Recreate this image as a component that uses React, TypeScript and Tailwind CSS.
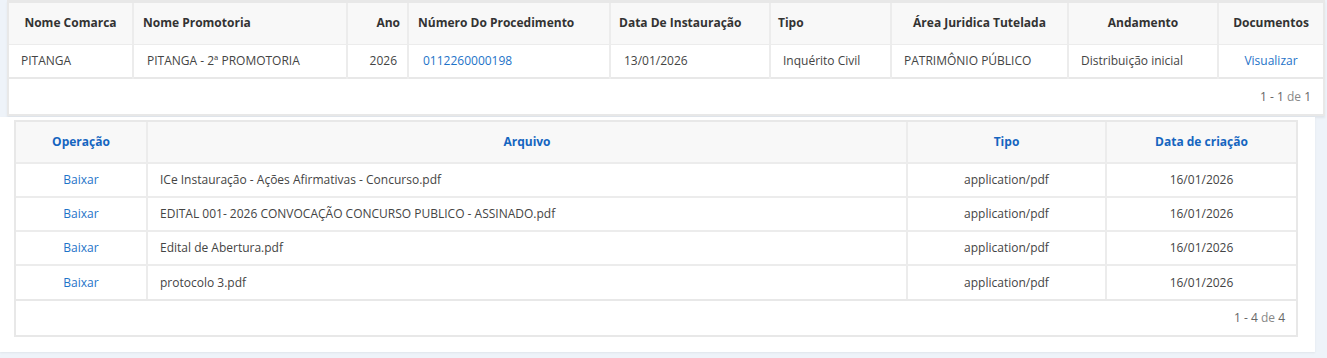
import React from "react";

const font = { fontFamily: '"Open Sans", "Noto Sans", Arial, sans-serif' };

interface arquivo {
  nome: string;
  tipo: string;
  data: string;
}

const arquivos: arquivo[] = [
  { nome: "ICe Instauração - Ações Afirmativas - Concurso.pdf", tipo: "application/pdf", data: "16/01/2026" },
  { nome: "EDITAL 001- 2026 CONVOCAÇÃO CONCURSO PUBLICO - ASSINADO.pdf", tipo: "application/pdf", data: "16/01/2026" },
  { nome: "Edital de Abertura.pdf", tipo: "application/pdf", data: "16/01/2026" },
  { nome: "protocolo 3.pdf", tipo: "application/pdf", data: "16/01/2026" },
];

export default function App() {
  const th = "h-[41px] px-[12px] font-bold text-[#333] border-r-2 border-[#ececec] last:border-r-0 whitespace-nowrap";
  const td = "h-[34px] px-[12px] border-r-2 border-[#ececec] last:border-r-0 whitespace-nowrap";
  const th2 = "h-[41px] px-[12px] font-bold text-[#1565c0] text-center border-r-2 border-[#ececec] last:border-r-0";
  const td2 = "h-[34px] px-[12px] border-r-2 border-t-2 border-[#ececec] last:border-r-0 whitespace-nowrap";
  const txt = "text-[#444]";
  const link = "text-[#1e73c8]";

  return (
    <div className="min-h-[358px] w-[1327px] bg-[#eef3f9] text-[12px]" style={font}>
      {/* grid dos procedimentos */}
      <div className="pl-[7px] pr-[2px]">
        <div className="bg-white border-2 border-t-[3px] border-[#e8e8e8] shadow-[0_2px_2px_rgba(0,0,0,0.06)]">
          <table className="w-full table-fixed border-collapse">
            <colgroup>
              <col className="w-[124px]" />
              <col className="w-[214px]" />
              <col className="w-[61px]" />
              <col className="w-[202px]" />
              <col className="w-[160px]" />
              <col className="w-[121px]" />
              <col className="w-[177px]" />
              <col className="w-[150px]" />
              <col />
            </colgroup>
            <thead className="bg-[#f8f8f8]">
              <tr className="border-b border-[#ececec]">
                <th className={`${th} text-center`}>Nome Comarca</th>
                <th className={`${th} text-left pl-[9px]`}>Nome Promotoria</th>
                <th className={`${th} text-right pr-[7px]`}>Ano</th>
                <th className={`${th} text-left pl-[9px]`}>Número Do Procedimento</th>
                <th className={`${th} text-left pl-[8px]`}>Data De Instauração</th>
                <th className={`${th} text-left pl-[7px]`}>Tipo</th>
                <th className={`${th} text-center`}>Área Juridica Tutelada</th>
                <th className={`${th} text-center`}>Andamento</th>
                <th className={`${th} text-center`}>Documentos</th>
              </tr>
            </thead>
            <tbody>
              <tr className="border-b-2 border-[#e8e8e8]">
                <td className={`${td} ${txt} pl-[12px]`}>PITANGA</td>
                <td className={`${td} ${txt} pl-[13px]`}>PITANGA - 2ª PROMOTORIA</td>
                <td className={`${td} ${txt} text-right pr-[10px]`}>2026</td>
                <td className={`${td} ${link} pl-[14px]`}>0112260000198</td>
                <td className={`${td} ${txt} pl-[13px]`}>13/01/2026</td>
                <td className={`${td} ${txt} pl-[12px]`}>Inquérito Civil</td>
                <td className={`${td} ${txt} pl-[12px]`}>PATRIMÔNIO PÚBLICO</td>
                <td className={`${td} ${txt} pl-[12px]`}>Distribuição inicial</td>
                <td className={`${td} ${link} text-center`}>Visualizar</td>
              </tr>
            </tbody>
          </table>
          <div className="h-[35px] flex items-center justify-end pr-[12px] text-[#666]">
            <span>1 - 1 <span className="text-[#888]">de</span> 1</span>
          </div>
        </div>
      </div>

      {/* grid dos documentos */}
      <div className="w-[1315px] bg-white mt-[1px] pt-[3px] pl-[14px] pr-[17px] pb-[15px] shadow-[0_1px_2px_rgba(0,0,0,0.06)]">
        <div className="border-2 border-[#e8e8e8]">
          <table className="w-full table-fixed border-collapse">
            <colgroup>
              <col className="w-[131px]" />
              <col className="w-[760px]" />
              <col className="w-[199px]" />
              <col />
            </colgroup>
            <thead className="bg-[#f8f8f8]">
              <tr>
                <th className={th2}>Operação</th>
                <th className={th2}>Arquivo</th>
                <th className={th2}>Tipo</th>
                <th className={th2}>Data de criação</th>
              </tr>
            </thead>
            <tbody>
              {arquivos.map((a) => (
                <tr key={a.nome}>
                  <td className={`${td2} ${link} text-center`}>Baixar</td>
                  <td className={`${td2} ${txt} text-left`}>{a.nome}</td>
                  <td className={`${td2} ${txt} text-center`}>{a.tipo}</td>
                  <td className={`${td2} ${txt} text-center`}>{a.data}</td>
                </tr>
              ))}
            </tbody>
          </table>
          <div className="h-[36px] border-t-2 border-[#e8e8e8] flex items-center justify-end pr-[11px] text-[#666]">
            <span>1 - 4 <span className="text-[#888]">de</span> 4</span>
          </div>
        </div>
      </div>
    </div>
  );
}
